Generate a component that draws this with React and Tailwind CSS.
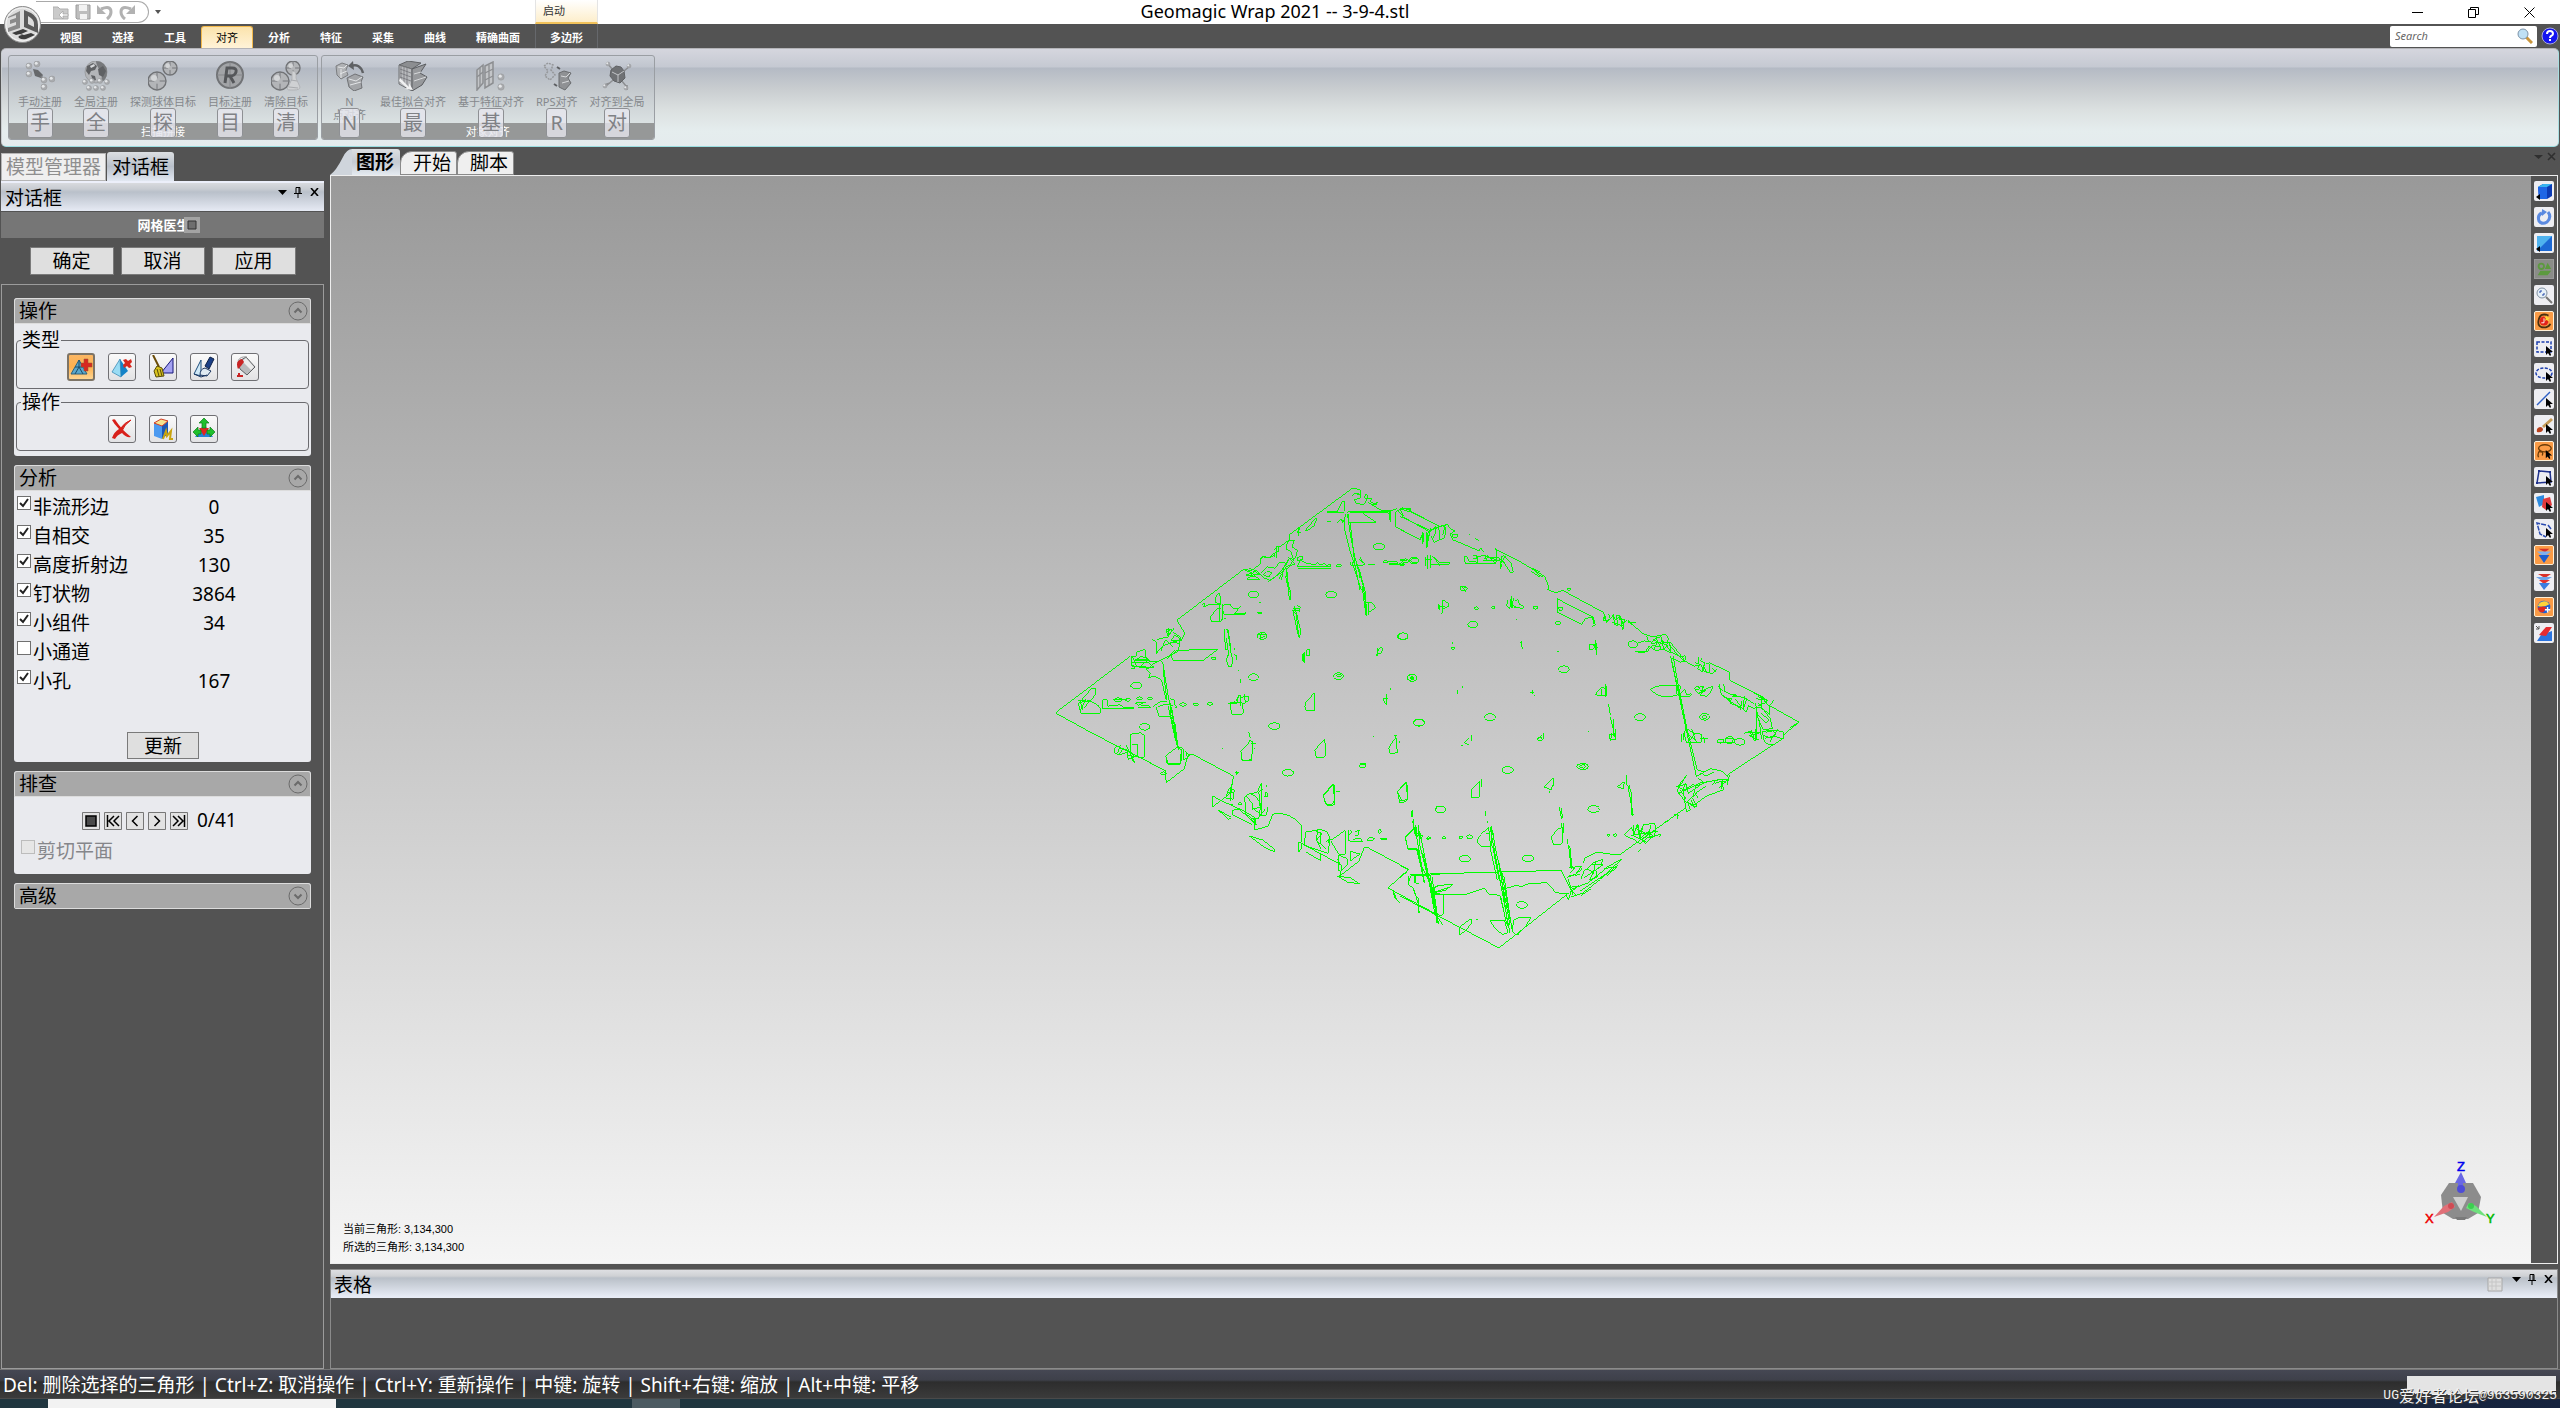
import React, { useState } from "react";

const menuTabs = ["视图", "选择", "工具", "对齐", "分析", "特征", "采集", "曲线", "精确曲面"];

const checks = [
  { label: "非流形边", count: "0", on: true },
  { label: "自相交", count: "35", on: true },
  { label: "高度折射边", count: "130", on: true },
  { label: "钉状物", count: "3864", on: true },
  { label: "小组件", count: "34", on: true },
  { label: "小通道", count: "", on: false },
  { label: "小孔", count: "167", on: true },
];

// Crosshair ball used by the target icons
const Target = ({ cx, cy, r }) => (
  <g>
    <circle cx={cx} cy={cy} r={r} fill="#b3b5b8" stroke="#717376" strokeWidth="1.4" />
    <path
      d={`M${cx - r} ${cy}h${r * 0.7}M${cx + r} ${cy}h${-r * 0.7}M${cx} ${cy - r}v${r * 0.7}M${cx} ${cy + r}v${-r * 0.7}`}
      stroke="#77797c"
      strokeWidth="1"
    />
    <circle cx={cx - r / 3} cy={cy - r / 3} r={r / 3} fill="#d3d5d7" />
  </g>
);

const Dots = ({ points, r = 3 }) =>
  points.map(([x, y]) => (
    <g key={`${x}-${y}`}>
      <circle cx={x} cy={y} r={r} fill="#a9abae" stroke="#96989b" strokeWidth="0.5" />
      <circle cx={x - 0.8} cy={y - 0.8} r={r / 2} fill="#e4e6e8" />
    </g>
  ));

const ribbonIcons = {
  manual: (
    <>
      <path d="M8 8l5 1 5 5-2 3-6-2z" fill="#66686b" />
      <path d="M16 15l3 4" stroke="#7d7f82" strokeWidth="2" />
      <Dots points={[[4, 5], [12, 3], [4, 13], [19, 19], [27, 18], [19, 26]]} />
    </>
  ),
  global: (
    <>
      <circle cx="15" cy="11" r="11" fill="#b3b5b8" stroke="#9b9da0" />
      <path d="M15 0q11 1 11 11 0 8-6 10 2-8-1-12-4-5-4-9z" fill="#77797c" />
      <path d="M6 5l6-3 4 3-2 4-4 1-2 4-3-4zM17 8l5-3 3 5-3 6-4-2zM10 14l4 1 1 4-3 1z" fill="#5f6164" />
      <path d="M9 5l4-2 1 2-4 2z" fill="#d7d9db" />
      <Dots points={[[4, 21], [11, 20], [19, 20], [26, 21], [8, 27], [15, 27], [22, 27]]} r={2.5} />
    </>
  ),
  probe: (
    <>
      <Target cx={9} cy={20} r={9} />
      <Target cx={22} cy={7} r={7} />
    </>
  ),
  target: (
    <>
      <circle cx="15" cy="14" r="13" fill="#a2a4a7" stroke="#717376" strokeWidth="2" />
      <path d="M15 1v27M2 14h26" stroke="#85878a" />
      <path d="M10 22l2-15h5q5 0 4 4t-6 4h-3M15 15l4 7" fill="none" stroke="#55575a" strokeWidth="3" />
    </>
  ),
  clear: (
    <>
      <Target cx={9} cy={20} r={9} />
      <Target cx={22} cy={7} r={7} />
      <path d="M21 10q5 0 4 7l4 9q0 3-6 3h-4q-4 0-2-3l4-8z" fill="#cfd1d3" stroke="#b1b3b6" />
      <path d="M20 19l6 1M18 26l9 1" stroke="#a9abae" />
    </>
  ),
  npoint: (
    <>
      <path d="M1 5l6-3 6 2-2 5 2 5-7 4-4-4z" fill="#b0b2b5" stroke="#7b7d80" />
      <path d="M3 6l6 1 3-3M5 13l7-3M6 8v9" stroke="#e3e5e7" fill="none" />
      <path d="M16 5q9-3 12 7" fill="none" stroke="#5f6164" strokeWidth="2.5" />
      <path d="M18 0l-5 5 6 4z" fill="#5f6164" />
      <path d="M12 17l8-4 8 3-2 5 1 6-8 3-5-4z" fill="#a3a5a8" stroke="#707275" />
      <path d="M14 18l7 2 6-4M15 24l11-3" stroke="#e3e5e7" fill="none" />
    </>
  ),
  bestfit: (
    <>
      <path d="M1 4L10 0l13 2-9 6z" fill="#8c8e91" stroke="#5f6164" />
      <path d="M1 4l13 4v22L1 23z" fill="#b9bbbe" stroke="#707275" />
      <path d="M2 8l11 4M2 12l11 4M2 16l11 4M3 5v17M6 6v18M9 7v19" stroke="#6d6f72" strokeWidth="0.7" />
      <path d="M14 8l14-5-6 9 7 4-5 8-10 6z" fill="#97999c" stroke="#5b5d60" />
      <path d="M16 13l7-2M16 20l12-4" stroke="#d7d9db" />
      <path d="M2 17l9 9v-4l4 7-8-1 2-1-8-7z" fill="#f0f1f2" />
    </>
  ),
  feature: (
    <>
      <path d="M1 9l6-5v18l-6 7zM9 5l8-4v21l-8 5z" fill="#c3c5c8" stroke="#8c8e91" strokeWidth="1.5" />
      <path d="M4 7v18M1 16l6-5M13 4v21M9 12l8-4M9 19l8-4" stroke="#8c8e91" strokeWidth="1.3" />
      <Dots points={[[25, 16], [25, 26]]} r={3.2} />
    </>
  ),
  rps: (
    <>
      <path d="M2 5l4-3 5 2-2 5 4 5-5 5-5-4 3-5z" fill="none" stroke="#96989b" strokeDasharray="2 1" strokeWidth="1.5" />
      <path d="M15 6l3 2M12 23l3 2" stroke="#5f6164" strokeWidth="2" />
      <path d="M17 12l5-2 7 2-3 5 3 5-6 7-6-3z" fill="#8f9194" stroke="#6a6c6f" />
      <path d="M19 15l5 1 4-4M20 22l7-2" stroke="#d7d9db" fill="none" />
    </>
  ),
  toglobal: (
    <>
      <path d="M6 3l18 22M28 5L4 25M8 22l-6 2M25 24v5" stroke="#8c8e91" strokeWidth="1.5" />
      <path d="M9 9l5-4 5 1 3 4 1 7-5 5-6-2-4-5z" fill="#6f7174" stroke="#606265" />
      <path d="M10 11l6 3 6-4M16 14v7" stroke="#c3c5c8" fill="none" />
      <Dots points={[[3, 25], [27, 5], [24, 27], [6, 3]]} r={2} />
    </>
  ),
};

const scanGroup = [
  { icon: "manual", label: "手动注册", hint: "手" },
  { icon: "global", label: "全局注册", hint: "全" },
  { icon: "probe", label: "探测球体目标", hint: "探" },
  { icon: "target", label: "目标注册", hint: "目" },
  { icon: "clear", label: "清除目标", hint: "清" },
];

const objectGroup = [
  { icon: "npoint", label: "N", second: "点对齐", hint: "N" },
  { icon: "bestfit", label: "最佳拟合对齐", hint: "最" },
  { icon: "feature", label: "基于特征对齐", hint: "基" },
  { icon: "rps", label: "RPS对齐", hint: "R" },
  { icon: "toglobal", label: "对齐到全局", hint: "对" },
];

const RibbonGroup = ({ title, items }) => (
  <section className="relative h-[85px] overflow-hidden rounded-[3px] border border-[#9a9ea3] bg-[linear-gradient(#cdd1d9_0px,#c0c5ce_11px,#b3b9c3_12px,#c5cace_35px,#dbe2e3_68px)]">
    <h2 className="absolute inset-x-0 bottom-0 h-[16px] bg-[#969898] text-center text-[11px] leading-[17px] text-white">
      {title}
    </h2>
    <div className="flex px-[3px] pt-[5px]">
      {items.map((item) => (
        <button key={item.icon} className="relative flex h-[78px] flex-col items-center px-[6px] text-[#85888c]">
          <svg width="30" height="30" viewBox="0 0 30 30" fill="none">
            {ribbonIcons[item.icon]}
          </svg>
          <span className="mt-[4px] text-[11px] leading-[13px]">{item.label}</span>
          {item.second && <span className="px-[2px] text-[11px] leading-[13px]">{item.second}</span>}
          {/* Keyboard hint laid over the button */}
          <span className="absolute top-[47px] flex h-[30px] min-w-[21px] items-center justify-center rounded-[3px] border border-[#8e9094] bg-[#e6e6ee]/80 px-[2px] text-[20px] leading-[28px] text-[#7f8185]">
            {item.hint}
          </span>
        </button>
      ))}
    </div>
  </section>
);

const PaneButtons = () => (
  <div className="flex h-[18px] items-center gap-[4px] text-black">
    <button aria-label="菜单" className="flex w-[12px] justify-center">
      <svg width="9" height="5" viewBox="0 0 9 5">
        <path d="M0 0h9L4.500 5z" fill="currentColor" />
      </svg>
    </button>
    <button aria-label="固定" className="flex w-[12px] justify-center">
      <svg width="8" height="11" viewBox="0 0 8 11" fill="none" stroke="currentColor">
        <path d="M2 6V0.500h4V6M5 1v5M0 6.500h8M4 7v4" />
      </svg>
    </button>
    <button aria-label="关闭" className="flex w-[12px] justify-center">
      <svg width="9" height="8" viewBox="0 0 9 8" fill="none" stroke="currentColor" strokeWidth="1.6">
        <path d="M1 0l7 8M8 0L1 8" />
      </svg>
    </button>
  </div>
);

const Section = ({ title, open = true, children }) => (
  <section className="overflow-hidden rounded-[3px] bg-[#e9eaee]">
    <h3 className="flex h-[26px] items-center justify-between rounded-t-[3px] border border-[#dcdcdc] bg-[#a8a8a8] pr-[2px] pl-[4px] text-[19px] leading-[24px] text-black">
      {title}
      <button aria-label={title}>
        <svg width="20" height="20" viewBox="0 0 20 20" fill="none" stroke="#6b6b6b">
          <circle cx="10" cy="10" r="9" />
          <path d={open ? "M6.500 11.500L10 8l3.500 3.500" : "M6.500 8.500L10 12l3.500-3.500"} strokeWidth="2" />
        </svg>
      </button>
    </h3>
    {children}
  </section>
);

const ToolButton = ({ active, label, children }) => (
  <button
    aria-label={label}
    className={
      active
        ? "flex h-[28px] w-[28px] items-center justify-center rounded-[3px] border-2 border-[#7d7466] bg-[linear-gradient(#fbb765,#fdb04e_50%,#ffd590)]"
        : "flex h-[28px] w-[28px] items-center justify-center rounded-[3px] border border-[#6f6f73] bg-[linear-gradient(#fafafa,#e2e2e4)]"
    }
  >
    <svg width="24" height="24" viewBox="0 0 24 24" fill="none" className="shrink-0">
      {children}
    </svg>
  </button>
);

const CheckBox = ({ label, on, disabled }) => (
  <label className={disabled ? "flex items-start gap-[2px] text-[#85868a]" : "flex items-start gap-[2px] text-black"}>
    <span className="relative mt-[3px] h-[14px] w-[14px]">
      <input
        type="checkbox"
        defaultChecked={on}
        disabled={disabled}
        className="peer block h-[14px] w-[14px] appearance-none border border-[#707070] bg-white disabled:border-[#bcbcbc] disabled:bg-[#e6e6e6]"
      />
      <svg
        className="pointer-events-none absolute inset-0 hidden peer-checked:block"
        width="14"
        height="14"
        viewBox="0 0 14 14"
        fill="none"
      >
        <path d="M3 7l3 3 5-7" stroke="#212121" strokeWidth="2" />
      </svg>
    </span>
    <span className="text-[19px] leading-[29px]">{label}</span>
  </label>
);

const DialogPanel = () => (
  <aside className="flex w-[324px] shrink-0 flex-col pl-[1px]">
    <div className="flex h-[34px] items-end gap-[1px]">
      <button className="h-[28px] border border-[#b5b5b5] bg-[#efefef] px-[4px] text-[19px] leading-[26px] text-[#8e8e8e]">
        模型管理器
      </button>
      <button className="h-[29px] rounded-t-[3px] bg-[linear-gradient(#dcdfe2,#b9c0ca_50%,#e2e8f2)] px-[5px] text-[19px] leading-[30px] text-black">
        对话框
      </button>
    </div>
    <div className="flex h-[30px] justify-between border-t-2 border-[#eceffa] bg-[linear-gradient(#d8dade_0px,#c8ccd2_6px,#b9c0ca_9px,#e6eaf4_28px)] pr-[4px] pl-[4px]">
      <h2 className="text-[19px] leading-[30px] text-black">对话框</h2>
      <PaneButtons />
    </div>
    <div className="mt-[1px] flex h-[26px] items-center justify-center bg-[#767676] pl-[12px] text-[13px] leading-[20px] font-bold text-white">
      <span>网格医生</span>
      <svg width="16" height="16" viewBox="0 0 16 16" className="z-10 -ml-[6px]">
        <path d="M0 0h16v16H0z" fill="#a3a3a3" />
        <path d="M4 4h8v8H4z" fill="#6e6e6e" stroke="#333" />
      </svg>
    </div>
    <div className="flex h-[46px] justify-center gap-[7px] pt-[9px]">
      {["确定", "取消", "应用"].map((name) => (
        <button
          key={name}
          className="h-[28px] w-[84px] border border-[#7a7a7a] bg-[#dfdfdf] text-[19px] leading-[24px] text-black"
        >
          {name}
        </button>
      ))}
    </div>
    <div className="flex flex-1 flex-col gap-[9px] border border-[#9b9b9b] px-[12px] pt-[13px]">
      <Section title="操作">
        <div className="px-[2px] pt-[4px] pb-[5px]">
          <fieldset className="rounded-[4px] border border-[#6b6b6f]">
            <legend className="ml-[4px] px-[1px] text-[19px] leading-[24px] text-black">类型</legend>
            <div className="flex h-[36px] gap-[13px] pt-[1px] pl-[50px]">
              <ToolButton active label="自动修复">
                <path d="M2 19L10 5l8 14z" fill="#5aa7cc" stroke="#2c617d" />
                <path d="M6 12h8M10 5v7l-4 7M10 12l4 7" stroke="#1d4b66" />
                <path d="M15 4h4v4h4v4h-4v4h-4v-4h-3V8h3z" fill="#d8281f" stroke="#8f5a3a" strokeWidth="0.5" />
              </ToolButton>
              <ToolButton label="删除钉状物">
                <path d="M2 17L10 4l1 18z" fill="#9adcf4" />
                <path d="M10 4l8 12-7 6z" fill="#1383c8" />
                <path d="M2 17L10 4l1 18z" stroke="#2c7fae" strokeWidth="0.7" />
                <path d="M13 5l3-1 2 2 3-2 1 3-2 2 2 3-3 1-2-2-3 2-1-3 2-2z" fill="#d8281f" />
              </ToolButton>
              <ToolButton label="清理">
                <path d="M22 3v15H10z" fill="#a4a2f2" stroke="#16167a" />
                <path d="M2 0l6 12" stroke="#6a4c08" strokeWidth="2" />
                <path d="M6 11l5 2 2 8-8 1-2-6z" fill="#d8c21f" stroke="#574b06" />
                <path d="M6 14l2 7M9 14l2 7" stroke="#574b06" />
              </ToolButton>
              <ToolButton label="去除特征">
                <path d="M2 19L9 5v16z" fill="#cfe8f6" stroke="#1c4d7c" />
                <path d="M8 20q0-6 5-7l6 3-4 5z" fill="#dfeaf2" stroke="#1b3560" />
                <path d="M13 11l5-9 4 2-5 10z" fill="#1b3f86" stroke="#0e2145" />
                <path d="M2 19l7 3 6-2" stroke="#1b3560" />
              </ToolButton>
              <ToolButton label="填充孔">
                <path d="M5 7l8-5 9 10-8 8-7-6z" fill="#b9bbbd" stroke="#5e6063" />
                <path d="M13 3l8 9-3 3-9-9z" fill="#ececec" />
                <path d="M5 6q-2 3 0 8l3-3 3-4q-1-3-3-3z" fill="#c92424" />
                <path d="M6 18v3M10 21H4" stroke="#c92424" strokeWidth="2" />
                <path d="M5 6q2-5 9-4" stroke="#9c9c9c" />
              </ToolButton>
            </div>
          </fieldset>
          <fieldset className="mt-[1px] rounded-[4px] border border-[#6b6b6f]">
            <legend className="ml-[4px] px-[1px] text-[19px] leading-[24px] text-black">操作</legend>
            <div className="flex h-[36px] gap-[13px] pt-[1px] pl-[91px]">
              <ToolButton label="删除所选择的">
                <path d="M2 3q3-2 4 1 6 9 15 16-5 1-9-4-5 2-7 6l-3-1q2-6 7-9-5-5-7-9z" fill="#d8201a" />
                <path d="M10 12q5-7 11-9-7 5-9 11z" fill="#d8201a" stroke="#d8201a" />
              </ToolButton>
              <ToolButton label="创建流形">
                <path d="M3 6v13l8 3V9z" fill="#4c9af0" />
                <path d="M11 9l6-5v13l-6 5z" fill="#1b59b8" />
                <path d="M3 6l7-4 7 2-6 5z" fill="#f6e38e" stroke="#d03a24" />
                <path d="M12 22l3-8 1 5 4-5-1 8h3" stroke="#c9a40f" strokeWidth="2" />
              </ToolButton>
              <ToolButton label="扩展选区">
                <path d="M3 20l9-13 9 13z" fill="#2384d8" />
                <path d="M7 11h10l-5 8z" fill="#e2251f" />
                <path d="M12 1l5 5h-3v5h-4V6H7z" fill="#1fc02c" stroke="#0c7d17" strokeWidth="0.7" />
                <path d="M1 15l5-5v3h3v4H6v3zM23 15l-5-5v3h-3v4h3v3z" fill="#1fc02c" stroke="#0c7d17" strokeWidth="0.700" />
              </ToolButton>
            </div>
          </fieldset>
        </div>
      </Section>

      <Section title="分析">
        <div className="flex flex-col pt-[2px] pb-[3px] pl-[3px] text-[19px] leading-[29px] text-black">
          {checks.map((row) => (
            <div key={row.label} className="flex h-[29px]">
              <div className="w-[141px]">
                <CheckBox label={row.label} on={row.on} />
              </div>
              <output className="w-[112px] text-center">{row.count}</output>
            </div>
          ))}
          <button className="mt-[36px] ml-[110px] h-[27px] w-[72px] border border-[#7a7a7a] bg-[#dfdfdf] leading-[24px]">
            更新
          </button>
        </div>
      </Section>

      <Section title="排查">
        <div className="px-[7px] pt-[14px] pb-[8px]">
          <div className="flex h-[19px] items-center gap-[4px] pl-[61px] text-black">
            {[
              "M4 4h10v10H4z",
              "M3.500 3v12M10 4L5 9l5 5M15 4l-5 5 5 5",
              "M11.500 4l-5 5 5 5",
              "M6.500 4l5 5-5 5",
              "M14.500 3v12M8 4l5 5-5 5M3 4l5 5-5 5",
            ].map((d, i) => (
              <button key={d} aria-label={`导航 ${i + 1}`} className="h-[18px] w-[18px] bg-[#e2e2e2]">
                <svg width="18" height="18" viewBox="0 0 18 18" fill="none" stroke="#000" strokeWidth="1.500">
                  <path d="M0.500 0.500h17v17H0.500z" stroke="#777" strokeWidth="1" />
                  <path d={d} fill={i === 0 ? "#4a4a4a" : "none"} />
                </svg>
              </button>
            ))}
            <span className="pl-[5px] text-[19px] leading-[19px]">0/41</span>
          </div>
          <div className="mt-[7px]">
            <CheckBox label="剪切平面" disabled />
          </div>
        </div>
      </Section>

      <Section title="高级" open={false} />
    </div>
  </aside>
);

// Small hole outlines as [x, y, rx]
const holesLeft = [
  [1017, 231, 17], [640, 375, 16], [873, 375, 16], [1088, 500, 16], [288, 648, 16], [640, 623, 15],
  [895, 620, 15], [1117, 625, 14], [313, 772, 16], [703, 770, 17], [1137, 760, 16], [743, 910, 17],
  [521, 566, 7], [666, 499, 14], [968, 890, 10], [370, 912, 9], [429, 705, 10], [467, 705, 8], [510, 703, 8],
  [896, 288, 8], [1117, 626, 5], [897, 619, 7], [659, 430, 5], [1036, 276, 7], [1122, 272, 13], [1085, 284, 8],
  [234, 691, 12], [298, 687, 9], [330, 687, 7], [262, 691, 8],
];
const holesRight = [
  [219, 375, 15], [10, 410, 14], [36, 535, 14], [492, 509, 16], [57, 669, 17], [270, 653, 17], [720, 653, 17],
  [915, 652, 15], [323, 812, 17], [548, 801, 17], [122, 930, 16], [581, 929, 17], [195, 1078, 16], [384, 1077, 17],
  [366, 1217, 17], [36, 536, 6], [915, 652, 7], [548, 801, 8], [191, 267, 11], [159, 446, 5], [407, 324, 7],
  [699, 434, 14], [86, 1016, 5], [132, 1015, 5], [183, 1014, 6], [209, 1012, 9], [646, 1007, 5], [626, 1007, 4],
  [475, 371, 8], [507, 269, 5], [16, 184, 10], [44, 183, 12], [962, 725, 10], [990, 722, 14], [1020, 727, 16],
  [165, 108, 8], [892, 566, 7], [1005, 588, 6], [990, 600, 6], [229, 326, 6], [280, 324, 5], [420, 719, 7],
];

const MeshView = () => (
  <svg
    className="absolute inset-0 h-full w-full"
    viewBox="331 176 2200 1088"
    fill="none"
    stroke="#00ff00"
    shapeRendering="crispEdges"
  >
    {/* Left half of the boundary */}
    <g transform="translate(1040 470) scale(0.3333)" strokeWidth="3">
      <path d="M270 560L48 728v4L150 788L260 845L375 903L378 940L432 898L440 866L448 855h10L580 920L572 960" />
      <path d="M410 452L612 298M410 452L434 492L426 508L414 522M748 195L938 55l22 5 2 12-12 4M748 195l2 14-36 26M612 298l20 6 28-20v-16l8-8 20 4 22-20" />
      <path d="M938 78l8-8 14 4v12l-18 4 8 12 22 2 10-18h12l-2 10 14 8 6-8-2 10-18-2M976 74l8 4-2 8h-8zM984 98l20 12 20 12h34l14-6" />
      <path d="M862 124h28l-18 4h36M892 126l16-32h6v30M862 127h50M922 127l130-3v32M1048 128v22M930 127h96l26 4M924 158h84l-38-26M926 132v24M862 156h10M892 158l10-8 8 2 4 8M904 152l6 8" />
      <path d="M1068 126l20-12 26 10M1068 126v46l72 38 10-14M1074 122l16 20 78 44M1112 124l78 42M1076 120l8-6 8 8M1100 116l12 2-2 8M1150 190v26M1160 188v48M1166 184l26-12M1170 190l-8 20M1188 168v20l-12 24M1196 170l4 40-18 8" />
      <path d="M916 132l-4 40 20 80 10 28M922 134l10 66 14 72M930 156l8 66 6 60M936 276l28 86M944 282l16 80M950 284l20 66 8 66M958 298l18 72 4 68M966 350l12 88M946 268l8 24 6 34M986 400l-2 36M988 398l12 4 6 14-20 12M978 400h8M956 268l20 16-14 4h-28l-4-12M960 262l8 18M984 286h22" />
      <path d="M796 182l30-36 4 2-8 20-22 16zM774 176v22M770 188h12M780 174l-8 14M770 264l16-4 2 10-14 4zM772 292h100l-2-8-10 4-8-6-12 4-8-8-6 8-30-6-16-10zM774 296h98" />
      <path d="M738 226l10-14h14l-6 20 16 10-4 18-26 38-10-8 16-24 12 4-8-24-14-8zM744 262l20 22-24 6M710 230v36M704 240l10-10 2 14-14 8v10M660 268l10-6 20 2 16-8M716 328l24-40M748 264l-12 24-28 32-18 12-20-8-20-20-22-8M684 336l14-10 30-20M732 292l-8 38M640 316h20l-18-12-10 16M620 330h40l-20-14-18 10M614 302l22 8-18 6 26 6M664 308l18-16 24 4 12-18h16M670 316l10-10 16 2-10 14z" />
      <path d="M738 296l10 96M742 306l2 36 6 20v30M736 318l6 30 6 20M764 410l-4 20 14 66 4 8 4-18-12-52-8-26M760 416h18v8h-22M772 408l8 4-2 14M768 430l8 72M754 420l18 18" />
      <path d="M536 370l-8 10-4 18 18 6v-20zM484 404l10-2-4 10 20-8h26M538 402v54M548 404v46M542 416h-10l-22 26 4 14h28l4-8v-34M552 406l18-2 8 12h20l4-8-18 24 34-2-2 4h-66l-4-22zM542 474v2M552 446h4M658 400h4M652 430h12M654 494h24M664 490l-4 16 16-6" />
      <path d="M552 478l4 62 10 4M562 482l6 36 4 30M556 480h8l8 60M558 504l8 54M566 550l-8 22 8 20h8l4-20-6-24M584 534v8M582 554l8 6-2 10M596 600v4M600 628v12" />
      <path d="M334 510l14 6v36l20-24 32-10 20 4-8 24-30 16-28 14-34-2-24 20 30 2M350 510l34-8 12-22h-18l4 18 20-22M362 544l14-34 22 22M384 500v-26M378 488l12-8M390 520l34-10-20-14-12 18h34M398 488l22 14-2 18M380 568l26-28M274 560v28l16 4-14-32h12v-12l26-8 2 20 14 14h-46M272 598h12v-6h-10M286 570h40l-22-10-20 12M282 590l60 4-16-12M276 578h50M400 574l-8-14 18-18 122-2-42 32z" />
      <path d="M344 580l16-8 8 10 16 100 12 50M368 580l4 50 8 60M318 600l26-20M318 600l12 10-4 14 18-4 20 12 14 60M348 712l8 28h36v-26M352 712l24-8 22 4M338 712l22-16h20" />
      <path d="M390 700l24 136M384 710l22 104M396 722l8 60 12 60M404 760l10 80M394 744l18 90M390 688l14 4-2 16M408 776l-14-40M400 704l10 8-6 4" />
      <path d="M112 692l40 4 22 12 6 10v14h-58l-8-30 26-28 12-16h14v14L128 716M120 696l8 26M136 690l-16 34M116 700l34-8M186 692l14-2 2 20 36-4 14 8h28v4h-92zM218 690h42M288 698h28l-20 8 34 4M294 714h38M284 700l12 8" />
      <path d="M272 794l30-4 12 10v40l-2 24-30-2-10-14zM274 826l18-2v34l-28 12-4-22-20 8-16-4-2-14 10-8 14 10-8 14M246 836l20 8 14 34M240 828l-8 24M258 828l26 52M262 858l26 4" />
      <path d="M378 858l32-24 14 8-4 42h-36l-8-24zM430 838v34l12-8-6-20M424 838l-2 46M440 852l8 4-8 14M414 832l12 4-6 30M588 906l4 8M586 910h10M546 836v4" />
      <path d="M572 700h34l4 30-6 4h-28l-6-20zM562 702l24-6 14-20v34M594 678l-2 24h-26M602 684l22-4v14l-16 10M612 674l4 28M634 672v2" />
      <path d="M822 671l1 53h-24l-5-12 4-14zM1030 686l14 2M1040 674v34l-12-20M1052 656v4M626 788l4 18M630 812l-8 14-20 18 4 30h28l4-54zM638 816v24M634 822h14M642 838h4" />
      <path d="M854 808l3 50-8 6h-20l-5-22zM1068 806l4 44-22 2-4-16 12-20zM1066 796v10M1078 816v6M998 800h4M960 882h16v12h-10M1062 798l10 2" />
      <path d="M790 550v28l-4-10 2-14M794 546v34M800 540h10l-2 18h-10zM1012 536v24M1018 536l-10 24M1020 532l8 4-4 14-10 2" />
      <path d="M1044 276h28v6h-26M1080 270l20 4M1046 286h46M1156 262v26M1164 258v40M1172 256v38M1178 262l10 10 12 16M1196 404v14M1172 286h28" />
      <path d="M880 944l3 48-6 12h-20l-7-24zM1100 940l2 52-12 8h-10l-8-34zM888 966h12" />
      {holesLeft.map(([x, y, rx]) => (
        <ellipse key={`${x}-${y}`} cx={x} cy={y} rx={rx} ry={rx > 12 ? 10 : rx / 2} />
      ))}
    </g>
    {/* Right half of the boundary */}
    <g transform="translate(1400 500) scale(0.3333)" strokeWidth="3">
      <path d="M0 28l30 8 88 44 24-6 10 14 12 6-14 10 8 16 80 34 4-10 8 12M0 50l94 44M0 90l60 30 8-18M0 30l12 20M4 26h24v8M68 98v36M78 96v46M84 100v42M92 84l-8 40M98 90l30-12 10 6-4 30-32 14-10-20M108 80l-28 24M136 76l-8 30M206 106h4M226 116l12 8" />
      <path d="M286 146l4 10-2 36h-92l-4-20h10l4 12 28 4-2-18 24-2 4 12M288 150l72 36 44 26 30 18 12 30-2 10 24 10M248 166l64 22 20 32 8-2-6-28-22-22-10 4M252 176l40-4 20 14M250 184h38M260 164l28 28M296 172l10 30M304 168l-2 40M316 170l-16 26M386 202l34 14M392 214l28 18M400 208l20 20 8 4M220 168h10v8h-10" />
      <path d="M464 280l26-8 20 12 100 54 4 10-2 16 18-4 10-14 8 16 14-12 8 24 14-14 12 14 34 28 30 10 38-8 8 14-6 20 14 20 30 14" />
      <path d="M472 296v42l74 36 10-16 22-6 4 22M472 296l20 12 88 44 6 24-8 4M476 322l12 2-2 8h-8zM610 352v12M616 348l4 20 12-10-6-14M640 342l4 32 10 4-4-30M650 348h10v12l14-2-4 30M638 368l34 12M662 350l6 40M684 368h24M686 364l10 12" />
      <path d="M714 430l20-6 24 4 10-14 16-2 6 20 14 6-12 10-24 6-20-14-14 20-28-4M768 412l18 40M776 420l-14 30M784 414l8 36 22 10-4-30-24-2M712 456h30l16-18 24 4M740 410l8 18M760 420l30 14M754 432l38-6" />
      <path d="M812 468l78 364M820 470l16 90 24 120 32 130 20 8M808 436l30 34 16 14 30 16 20-4 10 20 24 6 14-14M814 474l24 110 12 64M812 428l44 56-14 4-26-12M848 472l8-4 2 12-8 6M886 490l14 4-6 14 14 8 8-26-14-6M896 472v18M904 474v8M910 496l10 20M918 494l12-4 60 28v24l100 50 8 20 100 56-26 16M930 494l-2 22M936 506l14 12" />
      <path d="M752 570q20-16 70-13h8l2 30-18 4q-30 4-52-12zM828 556l14 4-4 24 18-14 6 16 12-4-4 8h-30M894 566l14-6v16l14-10 18-6-8 20-10 10-20-2-2-10M900 574h18l-20 8M912 560l-10 28M886 572l12 12" />
      <path d="M958 552l8 34 22 14 4 12 30 10 18 16 6-20 16 8 20-2 28 20-2-22 14-20M972 552l4 24 26 12 30 6 30 18M956 560l12 14M970 590l54 38M1008 600l22 30 12-34M1026 604l-4 28M1034 590l-4 42M1070 598l34 4M1074 590l28 18-26 10M1088 590l-4 32M1042 568l60 34" />
      <path d="M1068 612l8 50 14 28 28-2-6-30-34-46M1072 632l-2 90M1084 640l24 22-10 8-22-22M1078 660l8 60M1042 700h40l-34 8 30 14M1032 702l24-8 8 24M1050 696l14 28M1068 690v36M1090 696l26-4 14 12-16 12-24-8zM1090 710q4 30 32 26l30-20-2-18-20-6-30 6M1096 716l28-6 24 8M1134 690l-24 38M1196 670l-44 36M1120 736L984 826" />
      <path d="M858 686l26 16 20 2v24l-44 2-6-26zM846 704v24M852 702v20M864 704l28 22M884 704l-20 26M876 690l12 34M900 718h26M912 712l4 18M956 720h14v8h-14M978 716h24l-4 12h-28" />
      <path d="M888 832l44-24 32 6 20 16 4 12-24 8 10 20-54 20-40 30-26-16-22-30 28-46-26 34 20 12 50-24 50-8M830 862l30-8M836 882l46-28M846 878l12-26 8 30 30-20M860 900l-18-28M850 870l10 68 12-6-8-26 28-26M896 836l16 14-26 18M892 830l16-10 8 10 28-12M866 910l22 12M874 902l10 22 8-4-14-24M880 890l8-30 40-14M896 896l-10-14 34-22M938 858l10-16 40-2M946 852l24-8-6 24M990 826l-8 30M958 864l22-18" />
      <path d="M860 924L660 1066l-30-2-40-6-34 18-6 14M832 940v18M824 944l14 4M796 966h8M714 1058l10-8" />
      <path d="M675 1006l20-22 8 20 10-30 4 30 14-28 34-4 4 20-8 22-20 2-20 18-16-12-30-14M702 976v34l40 20M716 976l4 44 30-28M730 980l-10 40M694 1008l80-12M740 1000l20 8-22 24-12-10M752 976l-4 40 34-12-2 8M706 986l54 28M728 1020l36-26" />
      <path d="M302 1118l182-5 30 60-8 30-8-20M90 1124L300 1118M484 1113l-50 0M508 1180L297 1346L0 1190" />
      <path d="M316 1168l34-10 14 4 20-8 56-4 10 10 18 20 34 4M94 1186h100l60-20 12 18 34 4 20 84M102 1168l10-10 46-2-20 16-34 8M104 1178l44-14M100 1184l6-24" />
      <path d="M36 932v22M40 960l2 26 10 28-4-32M56 978l2 54 30 120M46 990l20 114 30 60 12 84M50 1050l24 100M68 1060l20 90 18 100M84 1130l20 110 24 36M88 1140l28 134M94 1150l18 122M104 1190l6 80M54 1048l20 104M42 986l-26 26 8 38h30M40 980l22 40M60 1006l8 4-6 10" />
      <path d="M258 934v16M262 964v8M270 982l60 320M274 980l16 84 20 80M266 984l6 60M270 1042l22 100M278 1040l20 104M294 1080l36 196M298 1090l26 190M306 1120l26 150M312 1130l24 160M244 1006l-12 14 2 12 12 10h24M244 1004l22-20M258 1004l12-4M274 980v60M280 1002v12M302 1190l18 84" />
      <path d="M478 924l8 36M484 926l4 30M486 970l2 60-8 6-20-2-6-20 20-26 16-4M490 970v30M502 1020v14M506 1036l8 72M510 1040l6 60 6 8M506 1104h14l20-4 6 10-26 20h-14M514 1100l12 6-14 14M502 1134l26-10 18-24M504 1138l16 50M512 1164l24-4-20 16 14 12M510 1172l50-20 60-48 48-26-66 60-60 46-30 10M544 1138l10-26 24-20 30-12-4 20-22 16-30 20M562 1110l20 8-14 24 24-8-2-20M576 1096l34 0-24 18M588 1084l-8 40M600 1140l54-42M540 1176l66-44M612 1108l40-6-30 28M544 1188l30-20M524 1130l16-6" />
      <path d="M24 1156l8-26h60M24 1156l14 8 8 24 10 10v40M46 1126l-2 24 10 4M56 1234l4 8M132 1186v54l-10 10-20-10M214 1258l-34 24v24l16-10 20-26zM270 1264h44l10 36-16 6-22-18zM340 1264l14-8h38l-14 24-26 28-14-10zM228 1262h6M350 1300l8 8M0 1098l24 12-6 10-18 16" />
      <path d="M20 850l2 48-8 4H0M0 870l18-20M240 846l-26 26v22h24zM246 840v22M458 838l-26 24 22 10 4-14M460 836v24M448 876v4M672 848l-20 14 18 6 4-20M680 828v30M684 856l16 90M688 858l8 30v60M694 896l4 54M214 706v20M206 716l-12 14 12 6M184 738h4M432 700v18M424 708l-12 14" />
      <path d="M626 614l6 34M632 654l14 60M640 660v50M646 690v30M628 706h20v14h-18zM636 700l-4 26M590 578l16-14 10 2 2 24-30-4zM616 554l4 36M620 560v28M604 568v18M564 696h2M174 570v12M188 560v6M398 572v12M390 580h12M404 586v4M362 426l6 22M366 424v12M472 456h4M158 428v4M348 360h4" />
      <path d="M586 422v30M590 430v36M570 434h20l-12 16h-10zM578 436l16 8M324 300l-4 20 10 6 4-34M336 290v34M340 294l-2 30M344 304l10-4 4 14 12 6v6l-28-2M330 312l22 12M128 302l-2 40M130 302l14 8 2 10-16 8M114 322h20M118 316v14M184 260l14 16M180 260l20 4M84 166v42M92 168v38M76 180h20M96 168l22 20h30l-2 8H94M0 184h8M0 194h14" />
      {holesRight.map(([x, y, rx]) => (
        <ellipse key={`${x}-${y}-${rx}`} cx={x} cy={y} rx={rx} ry={rx > 12 ? 10 : rx / 2 + 1} />
      ))}
    </g>
    {/* Lower left edge */}
    <g transform="translate(1040 760) scale(0.3333)" strokeWidth="3">
      <path d="M580 50l-8 50-30 24-24 18v-32l30 16 66 30 30 18 4 22M534 152l26 14 14 8-8 6zM578 152l20-2 40 36M578 152l-2 14 60 30M566 88l16 4-2 28-24-4zM570 84v40M560 100h20M596 130h8v6h-8zM572 134h6" />
      <path d="M614 112l14-10 20 10 14 22-6 44h-20l-20-16zM618 108l18 24v20M664 70v90M668 90l-12 8 4 46-20 4 28 22 12-4 2-22M676 100h6v12h-8zM662 74l-10 24-20 6M680 78v4M632 176l14 20-6-20zM644 180v32l40-12 14-36q50-10 86 34v50M676 148l-16 22" />
      <path d="M628 230l40 12 36 28v8l-34-16zM776 248v30l8-10V250zM792 250l6-32 24-4 18-4 22 8 8 20-6 44-70-24zM784 252l118 64M798 278l44 26v-20M828 216l18 6-16 20 12 26M834 212l-6 30 30 26M840 220l2 30M858 246l22-8 34-24h2v70h-20l-24-40M864 240v10" />
      <path d="M894 288v44l8 4 20-20v-18l-24-10M892 300l12 20-2 28M902 348l54-42 16-40q2-4 10-2l124 66-62 56 140 76M932 276v28l28-20zM892 350l40 6 28 18-38-6zM904 346l-12 6" />
      <path d="M924 212v32l16 2M930 212l6 6-10 8M944 218l14-6-4 16h-10M940 240l20-4 8 10h-28M980 242q8-12 24-4-6 10-24 4M1014 216l6-6 4 8-6 4zM1020 238h22l-8 4zM1158 236h12M1164 232v10" />
      <path d="M1060 396l4 20 16 14M1062 400l8 20M1114 154v20M1118 184l6 40M1128 196l-2 34M1134 200l6 30M1120 210l-24 26 8 32h28l20 100M1140 220l24 120 26 130M1110 346h60M1106 350v28l14 8 16 50v24M1124 346l2 24 10 4M1170 346l22 134M1176 352l18 130" />
      <path d="M1174 346l26-2M1180 386l20-8M1176 404h24M1190 148q-6-8 10-8M604 0q12 8 30 0M276 0l6 6M380 0v12h42V0" />
      <path d="M878 74l6 6v54l-6 4h-18l-11-30zM888 96h12M1098 68l5 14v38l-18 4-13-28zM590 36v10M586 40h10" />
    </g>
  </svg>
);

const AxisTriad = () => (
  <svg className="absolute right-[35px] bottom-[36px]" width="72" height="68" viewBox="0 0 72 68">
    <path d="M25 24h24l8 14-3 16-10 6H29l-10-6-2-18z" fill="#8c8c8c" />
    <path d="M31 58h12l-2 3h-8z" fill="#7a7a7a" />
    <path d="M29 38h15l-7 14z" fill="#cfcfcf" />
    <path d="M37 13l5 11h-3v7h-5v-7h-3z" fill="#6a68e4" />
    <circle cx="37" cy="30" r="4" fill="#4e4cd8" />
    <path d="M10 58l10-11 8-4 3 5-7 5z" fill="#e07078" />
    <circle cx="27" cy="47" r="3" fill="#cf4b54" />
    <path d="M63 58L52 47l-7-3-3 5 8 4z" fill="#6fe07d" />
    <circle cx="47" cy="47" r="3" fill="#3ccf50" />
    <g fontFamily="Liberation Sans, sans-serif" fontSize="13">
      <text x="33" y="12" fill="#0000ee" stroke="#0000ee" strokeWidth="0.500">Z</text>
      <text x="1" y="64" fill="#ee0000" stroke="#ee0000" strokeWidth="0.500">X</text>
      <text x="62" y="64" fill="#00b800" stroke="#00b800" strokeWidth="0.500">Y</text>
    </g>
  </svg>
);

const cursor = <path d="M12 9v9l2-2 2 3 1-1-1-3h3z" fill="#000" />;

// tone: w = light tile, o = highlighted, g = disabled
const sideTools = [
  { name: "视图", tone: "w", art: <><path d="M4 6l5-3h9v12l-5 3H5z" fill="#0b3bb5" /><path d="M4 6h9v12H5z" fill="#1e66e6" /><path d="M4 6l5-3h9l-5 3z" fill="#36b3f0" /><path d="M2 16l4-3v6z" fill="#000" /></> },
  { name: "旋转", tone: "w", art: <><path d="M14 5q4 5-1 10-5 3-8-1-2-6 3-8" stroke="#5b8ae0" strokeWidth="3" /><path d="M8 2v7l5-4z" fill="#5b8ae0" /></> },
  { name: "着色", tone: "w", art: <><path d="M3 3h15v15H3z" fill="#1c69d4" /><path d="M3 3h15L3 18z" fill="#4eb2ee" /><path d="M2 16l4-3v6z" fill="#000" /></> },
  { name: "形状", tone: "g", art: <><circle cx="7" cy="7" r="3" stroke="#5c9a3e" strokeWidth="2" /><path d="M11 10l3-7 4 7zM3 17l3-5h12l-4 5z" fill="#5c9a3e" /></> },
  { name: "缩放", tone: "w", art: <><circle cx="8" cy="8" r="5" stroke="#8090a0" fill="#e6f0f8" /><path d="M12 12l6 6" stroke="#777" strokeWidth="2" /><path d="M6 8V6h2M10 8v2H8" stroke="#2346a8" /></> },
  { name: "旋转中心", tone: "o", art: <><path d="M15 4q-9-4-11 5t8 8q4-1 5-4" stroke="#4a3010" strokeWidth="2" /><circle cx="10" cy="10" r="5" fill="#e2231a" /><path d="M13 3l1 3h3l-2 2 1 3-3-2-2 1 1-3-2-2h3z" fill="#ffd83a" /><path d="M10 7v5H7" stroke="#fff" /></> },
  { name: "矩形选择", tone: "w", art: <><path d="M3 5h14v10H3z" stroke="#1d3fae" strokeWidth="1.500" strokeDasharray="3 1.500" />{cursor}</> },
  { name: "椭圆选择", tone: "w", art: <><ellipse cx="10" cy="10" rx="8" ry="5" stroke="#1d3fae" strokeWidth="1.500" strokeDasharray="3 1.500" />{cursor}</> },
  { name: "直线选择", tone: "w", art: <><path d="M3 16L16 3" stroke="#2d5fc4" strokeWidth="1.500" />{cursor}</> },
  { name: "画笔", tone: "w", art: <><path d="M18 4l-9 8" stroke="#c49a56" strokeWidth="3" /><path d="M3 17q-1-4 3-5 3 0 3 3-2 3-6 2z" fill="#b8401c" />{cursor}</> },
  { name: "套索", tone: "o", art: <><ellipse cx="11" cy="7" rx="7" ry="4" stroke="#6b3c08" strokeWidth="1.500" /><path d="M6 9q-4 4-2 8M5 11q5-1 3 4" stroke="#6b3c08" strokeWidth="1.500" />{cursor}</> },
  { name: "多边形选择", tone: "w", art: <><path d="M5 4l11 1 1 10-14 1z" stroke="#20328c" strokeWidth="1.500" /><path d="M4 3h2v2H4zM15 4h2v2h-2zM2 15h2v2H2z" fill="#20328c" />{cursor}</> },
  { name: "可见选择", tone: "w", art: <><path d="M2 4l8-2v9l-5 3z" fill="#2c8be0" /><path d="M9 6l7-2 2 8-6 5-4-3z" fill="#e0393c" />{cursor}</> },
  { name: "曲线选择", tone: "w", art: <><path d="M12 6L3 4l3 11 6 3M14 6l3 4" stroke="#2b4bb0" strokeWidth="1.500" strokeDasharray="5 1" />{cursor}</> },
  { name: "仅可见", tone: "o", art: <><path d="M4 3h12l-5 4z" fill="#d8302a" /><path d="M2 6h16l-8 6z" fill="#7fb0f0" /><path d="M4 10h12l-6 9z" fill="#1d5ed0" /></> },
  { name: "贯通", tone: "w", art: <><path d="M4 3h13l-6 4z" fill="#d8302a" /><path d="M2 6h16l-8 5z" fill="#6ea4ea" /><path d="M5 9h11l-6 4z" fill="#e2332e" /><path d="M5 12h11l-6 7z" fill="#3a7de0" /></> },
  { name: "背面", tone: "o", art: <><circle cx="10" cy="10" r="7" fill="#1d62d8" /><path d="M3 9q3-7 10-5l3 3q-6 4-13 2z" fill="#ffd33a" /><path d="M3 11q6-3 10 0l-4 5q-5 0-6-5z" fill="#e0281f" /><path d="M14 10v6M11 13h6" stroke="#fff" strokeWidth="1.500" /></> },
  { name: "着色选择", tone: "w", art: <><path d="M3 18h15V8L7 12z" fill="#2a74e0" /><path d="M5 12l7-8h6l-6 9z" fill="#e52c30" /><path d="M2 3l3 3M5 3v3H2" stroke="#555" /></> },
];

const toneClass = {
  w: "h-[20px] w-[20px] rounded-[2px] bg-[#eeeef2]",
  o: "h-[20px] w-[20px] rounded-[2px] border border-[#fff0d8] bg-[#fa9b46]",
  g: "h-[20px] w-[20px] border border-[#9a9a9a] bg-[#8a8c88]",
};

const TopBar = ({ active, setActive }) => (
  <header className="relative">
    <div className="grid h-[24px] grid-cols-[1fr_auto_1fr] bg-white">
      <div className="flex items-center pl-[36px]">
        <div className="flex h-[22px] w-[113px] items-center gap-[6px] rounded-r-full border border-l-0 border-[#a9a9a9] pl-[17px]">
          <button aria-label="打开">
            <svg width="16" height="16" viewBox="0 0 16 16">
              <path d="M0 3h5l2 2h8v10H0z" fill="#cacaca" stroke="#b0b0b0" />
              <path d="M6 11l4-4v3h5v2h-5v3z" fill="#fff" stroke="#a0a0a0" strokeWidth="0.700" />
            </svg>
          </button>
          <button aria-label="保存">
            <svg width="16" height="16" viewBox="0 0 16 16">
              <path d="M1 1h14v14H2l-1-1z" fill="#bdbdbd" stroke="#9e9e9e" />
              <path d="M4 1h8v6H4zM5 10h7v5H5z" fill="#f2f2f2" />
            </svg>
          </button>
          <button aria-label="撤销">
            <svg width="16" height="16" viewBox="0 0 16 16" fill="none">
              <path d="M4 5q10-4 10 3 0 4-4 7" stroke="#b2b2b2" strokeWidth="3" />
              <path d="M0 1v9h9z" fill="#b2b2b2" />
            </svg>
          </button>
          <button aria-label="重做">
            <svg width="16" height="16" viewBox="0 0 16 16" fill="none">
              <path d="M12 5Q2 1 2 8q0 4 4 7" stroke="#b2b2b2" strokeWidth="3" />
              <path d="M16 1v9H7z" fill="#b2b2b2" />
            </svg>
          </button>
        </div>
        <button aria-label="自定义" className="ml-[6px]">
          <svg width="6" height="4" viewBox="0 0 6 4">
            <path d="M0 0h6L3 4z" fill="#555" />
          </svg>
        </button>
      </div>
      <h1 className="pr-[10px] text-[18px] leading-[22px] text-black">Geomagic Wrap 2021 -- 3-9-4.stl</h1>
      <div className="flex items-center justify-end gap-[45px] pr-[25px] text-black">
        <button aria-label="最小化">
          <svg width="11" height="11" viewBox="0 0 11 11" fill="none" stroke="currentColor">
            <path d="M0 5.500h11" />
          </svg>
        </button>
        <button aria-label="还原">
          <svg width="11" height="11" viewBox="0 0 11 11" fill="none" stroke="currentColor">
            <path d="M0.500 2.500h7v8h-7zM2.500 2.500v-2h8v7h-3" />
          </svg>
        </button>
        <button aria-label="关闭">
          <svg width="11" height="11" viewBox="0 0 11 11" fill="none" stroke="currentColor">
            <path d="M0.500 0.500l10 10M10.500 0.500l-10 10" />
          </svg>
        </button>
      </div>
    </div>

    <div className="flex h-[24px] items-end justify-between bg-[#535353] pl-[45px]">
      <nav className="flex items-end text-[11px] leading-[24px] font-bold text-white">
        {menuTabs.map((name) => (
          <button
            key={name}
            onClick={() => setActive(name)}
            className={
              name === active
                ? "h-[22px] rounded-t-[3px] border border-b-0 border-[#f3b94c] bg-[linear-gradient(#fbe3ac,#fff3d8)] px-[14px] leading-[22px] font-normal text-black"
                : "h-[22px] px-[15px]"
            }
          >
            {name}
          </button>
        ))}
        <div className="relative h-[24px] w-[63px] border-x border-[#66686c]">
          {/* Context heading sits over the title bar */}
          <span className="absolute -inset-x-px bottom-full h-[24px] border-x border-[#e4e4e4] border-b-2 border-b-[#f2c25a] bg-[linear-gradient(#ffffff,#fdeecb)] pl-[7px] leading-[22px] font-normal text-[#333]">
            启动
          </span>
          <button className="w-full pt-[2px]">多边形</button>
        </div>
      </nav>
      <div className="flex h-[24px] items-center gap-[4px] pr-[1px]">
        <label className="flex h-[21px] w-[147px] items-center rounded-[2px] bg-white pr-[4px] pl-[5px]">
          <input
            type="text"
            placeholder="Search"
            aria-label="Search"
            className="w-full min-w-0 text-[11px] leading-[18px] italic outline-none placeholder:text-[#666]"
          />
          <svg width="16" height="16" viewBox="0 0 16 16" className="shrink-0">
            <path d="M9 9l6 6" stroke="#c9953c" strokeWidth="3" />
            <circle cx="6" cy="6" r="5" fill="#bfe0f5" stroke="#7d93a8" />
          </svg>
        </label>
        <button aria-label="帮助">
          <svg width="18" height="18" viewBox="0 0 18 18" fill="none">
            <circle cx="9" cy="9" r="8" fill="#1414f0" stroke="#a9a9d8" />
            <path d="M6 7q0-3 3-3t3 3q0 1-2 2-1 1-1 2M9 12v2" stroke="#fff" strokeWidth="2" />
          </svg>
        </button>
      </div>
    </div>

    {/* Application button */}
    <button aria-label="应用程序菜单" className="absolute top-[5px] left-[3px]">
      <svg width="39" height="39" viewBox="0 0 39 39" fill="none">
        <circle cx="19.500" cy="19.500" r="18" fill="#dcdcdc" stroke="#8c8c8c" />
        <circle cx="19.500" cy="19.500" r="16.500" stroke="#f6f6f6" />
        <path d="M5 12l12-6v17L5 27v-4l8-3v-3l-6 2v-4l6-2v-3l-8 3z" fill="#8a8a8a" />
        <path d="M21 5l7 3q7 4 7 12v8l-14-6zM25 11v8l6 3v-3q0-5-6-8z" fill="#5a5a5a" fillRule="evenodd" />
        <path d="M9 28l11-4 5 2-7 3 3 1 7-2 4 2-9 4q-4 1-7-1-2-2 3-3l-2-1-4 1z" fill="#3c3c3c" />
      </svg>
    </button>

    <div className="bg-[#535353] px-[1px]">
      <div className="flex h-[99px] items-start gap-[3px] rounded-[5px] border border-t-[#b4b4b8] border-r-[#a9dfe2] border-b-[#9adde0] border-l-[#c9cdd0] bg-[linear-gradient(#d5d6de_0px,#c5c9d2_18px,#b4bac4_19px,#c9cdd0_40px,#dce1e1_62px,#e5edee_82px,#e4ebed_98px)] pt-[6px] pl-[6px]">
        <RibbonGroup title="扫描拼接" items={scanGroup} />
        <RibbonGroup title="对象对齐" items={objectGroup} />
      </div>
    </div>
  </header>
);

const App = () => {
  const [active, setActive] = useState("对齐");

  return (
    <div className="flex h-screen w-full flex-col overflow-hidden bg-[#535353] font-['Noto_Sans','Noto_Sans_CJK_SC',sans-serif]">
      <TopBar active={active} setActive={setActive} />

      <div className="flex min-h-0 flex-1 gap-[6px] pr-[2px]">
        <DialogPanel />

        <main className="flex min-w-0 flex-1 flex-col">
          <div className="flex h-[28px] items-end justify-between">
            <div className="flex items-end text-[19px] text-black">
              <button className="flex h-[26px] items-stretch font-bold">
                <svg width="22" height="26" viewBox="0 0 22 26">
                  <path d="M0 26Q6 22 13 8Q17 0 22 0v26z" fill="#cfd5dc" />
                </svg>
                <span className="rounded-tr-[3px] bg-[linear-gradient(#dcdfe2,#c4cad2_50%,#e4eaf0)] pr-[6px] pl-[4px] leading-[27px]">
                  图形
                </span>
              </button>
              <button className="h-[24px] rounded-tl-[12px] rounded-tr-[3px] border border-[#8a8a8a] bg-[#efefef] pr-[5px] pl-[12px] leading-[23px]">
                开始
              </button>
              <button className="h-[24px] rounded-tl-[12px] rounded-tr-[3px] border border-[#8a8a8a] bg-[#efefef] pr-[5px] pl-[12px] leading-[23px]">
                脚本
              </button>
            </div>
            <svg width="24" height="24" viewBox="0 0 24 24" fill="none">
              <path d="M0 4h9L4.500 8z" fill="#2f2f2f" />
              <path d="M14 2l7 7M21 2l-7 7" stroke="#2f2f2f" strokeWidth="1.600" />
            </svg>
          </div>

          <div className="flex min-h-0 flex-1 border border-[#eeeeee]">
            <div className="relative flex-1 bg-[linear-gradient(#999999,#f5f5f5)]">
              <MeshView />
              <p className="absolute bottom-[7px] left-[12px] font-['Liberation_Sans','Noto_Sans_CJK_SC',sans-serif] text-[11px] leading-[18px] text-black">
                当前三角形: 3,134,300
                <br />
                所选的三角形: 3,134,300
              </p>
              <AxisTriad />
            </div>
            <div className="flex w-[26px] flex-col items-center gap-[6px] bg-[#535353] pt-[5px]">
              {sideTools.map((tool) => (
                <button key={tool.name} aria-label={tool.name} className={toneClass[tool.tone]}>
                  <svg viewBox="0 0 20 20" fill="none" className="h-full w-full">
                    {tool.art}
                  </svg>
                </button>
              ))}
            </div>
          </div>

          <section className="mt-[5px] h-[100px] border border-[#8b8b8b]">
            <div className="flex h-[28px] justify-between bg-[linear-gradient(#dedfe2_0px,#cfd1d4_6px,#b9c0c8_8px,#e8ecf6_27px)] pr-[3px] pl-[3px]">
              <h2 className="text-[19px] leading-[30px] text-black">表格</h2>
              <div className="flex gap-[7px]">
                <svg width="16" height="22" viewBox="0 0 16 22">
                  <path d="M1 8h14v13H1z" fill="#dedede" stroke="#a8a8a8" />
                  <path d="M5 8v13M9 8v13M1 12h14M1 16h14" stroke="#c6c6c6" />
                </svg>
                <PaneButtons />
              </div>
            </div>
          </section>
        </main>
      </div>

      {/* Status line, with the strip of the desktop below it */}
      <footer className="relative">
        <p className="h-[30px] border-t border-b border-t-[#777] border-b-[#4a4a4a] bg-[linear-gradient(#454753_0px,#3e404a_10px,#2d2d2d_12px,#3c3c3c_29px)] pl-[3px] text-[19px] leading-[30px] text-white">
          Del: 删除选择的三角形 | Ctrl+Z: 取消操作 | Ctrl+Y: 重新操作 | 中键: 旋转 | Shift+右键: 缩放 | Alt+中键: 平移
        </p>
        <div className="flex h-[9px] bg-[linear-gradient(90deg,#20363f_0%,#20363f_60%,#16233f_100%)] pl-[48px]">
          <span className="w-[288px] bg-[#f2f2f2]" />
          <span className="ml-[296px] w-[48px] bg-[#4c5b62]" />
        </div>
        <div className="absolute right-[4px] bottom-[14px] h-[18px] w-[149px] bg-[#e4e4e4]" />
        <p className="absolute right-[3px] bottom-[1px] flex h-[22px] items-center text-[16px] leading-[22px] whitespace-nowrap text-[#f2f2f2] [text-shadow:1px_1px_0_#333]">
          <span className="font-['Liberation_Mono',monospace] text-[13px]">UG</span>
          <span>爱好者论坛</span>
          <span className="font-['Liberation_Mono',monospace] text-[13px]">@963590325</span>
        </p>
      </footer>
    </div>
  );
};

export default App;
